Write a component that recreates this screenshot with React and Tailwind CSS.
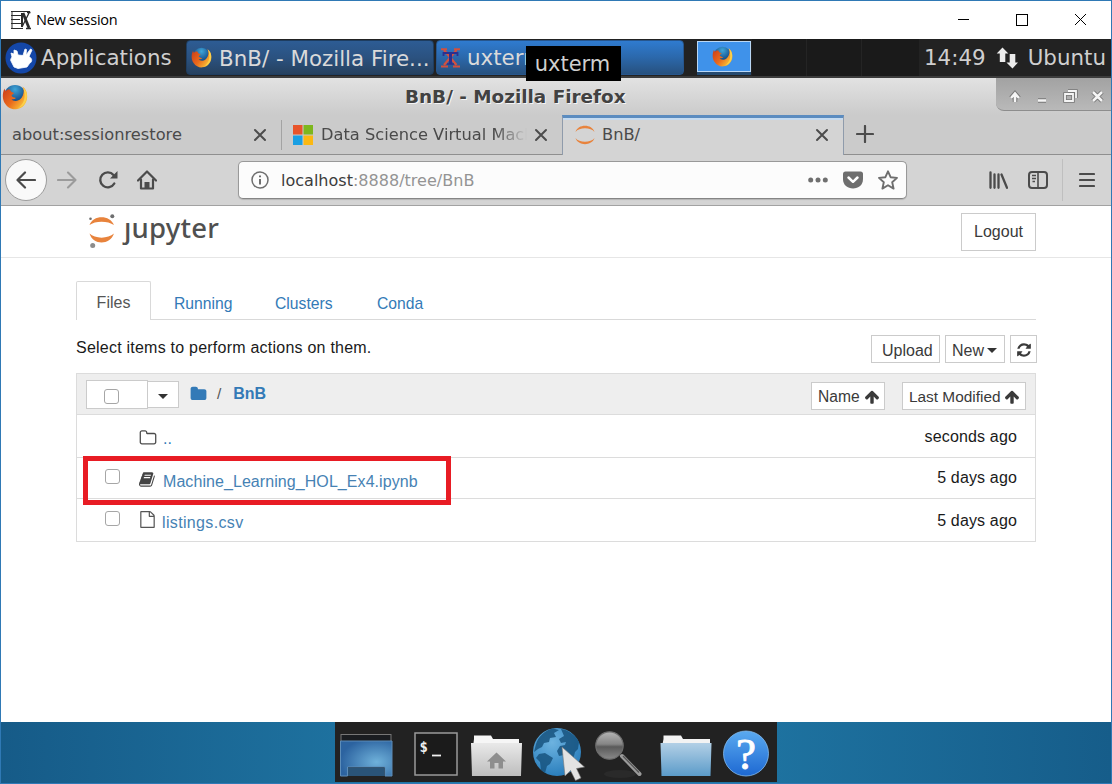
import React from "react";

const FA = {
  book: "M1639 478q40 57 18 129l-275 906q-19 64-76.5 107.5t-122.5 43.5h-923q-77 0-148.5-53.5t-99.5-131.5q-24-67-2-127 0-4 3-27t4-37q1-8-3-21.5t-3-19.5q2-11 8-21t16.5-23.5 16.5-23.5q23-38 45-91.5t30-91.5q3-10 .5-30t-.5-28q3-11 17-28t17-23q21-36 42-92t25-90q1-9-2.5-32t.5-28q4-13 22-30.5t22-22.5q19-26 42.5-84.5t27.5-96.5q1-8-3-25.5t-2-26.5q2-8 9-18t18-23 17-21q8-12 16.5-30.5t15-35 16-36 19.5-32 26.5-23.5 36-11.5 47.5 5.5l-1 3q38-9 51-9h761q74 0 114 56t18 130l-274 906q-36 119-71.5 153.5t-128.5 34.5h-869q-27 0-38 15-11 16-1 43 24 70 144 70h923q29 0 56-15.5t35-41.5l300-987q7-22 5-57 38 15 59 43zm-1064 2q-4 13 2 22.5t20 9.5h608q13 0 25.5-9.5t16.5-22.5l21-64q4-13-2-22.5t-20-9.5h-608q-13 0-25.5 9.5t-16.5 22.5zm-83 256q-4 13 2 22.5t20 9.5h608q13 0 25.5-9.5t16.5-22.5l21-64q4-13-2-22.5t-20-9.5h-608q-13 0-25.5 9.5t-16.5 22.5z",
  refresh: "M1639 1056q0 5-1 7-64 268-268 434.5t-478 166.5q-146 0-282.5-55t-243.5-157l-129 129q-19 19-45 19t-45-19-19-45v-448q0-26 19-45t45-19h448q26 0 45 19t19 45-19 45l-137 137q71 66 161 102t187 36q134 0 250-65t186-179q11-17 53-117 8-23 30-23h192q13 0 22.5 9.5t9.5 22.5zm25-800v448q0 26-19 45t-45 19h-448q-26 0-45-19t-19-45 19-45l138-138q-148-137-349-137-134 0-250 65t-186 179q-11 17-53 117-8 23-30 23h-199q-13 0-22.5-9.5t-9.5-22.5v-7q65-268 270-434.5t480-166.5q146 0 284 55.5t245 156.5l130-129q19-19 45-19t45 19 19 45z",
  arrowUp: "M1675 971q0 51-37 90l-75 75q-38 38-91 38-54 0-90-38l-294-293v704q0 52-37.5 84.5t-90.5 32.5h-128q-53 0-90.5-32.5t-37.5-84.5v-704l-294 293q-36 38-90 38t-90-38l-75-75q-38-38-38-90 0-53 38-91l651-651q35-37 90-37 54 0 91 37l651 651q37 39 37 91z",
  folder: "M1728 608v704q0 92-66 158t-158 66h-1216q-92 0-158-66t-66-158v-960q0-92 66-158t158-66h320q92 0 158 66t66 158v32h672q92 0 158 66t66 158z",
  folderO: "M1600 1312v-704q0-40-28-68t-68-28h-704q-40 0-68-28t-28-68v-64q0-40-28-68t-68-28h-320q-40 0-68 28t-28 68v960q0 40 28 68t68 28h1216q40 0 68-28t28-68zm128-704v704q0 92-66 158t-158 66h-1216q-92 0-158-66t-66-158v-960q0-92 66-158t158-66h320q92 0 158 66t66 158v32h672q92 0 158 66t66 158z",
  fileO: "M1596 380q28 28 48 76t20 88v1152q0 40-28 68t-68 28h-1344q-40 0-68-28t-28-68v-1600q0-40 28-68t68-28h896q40 0 88 20t76 48zm-444-244v376h376q-10-29-22-41l-313-313q-12-12-41-22zm384 1528v-1024h-416q-40 0-68-28t-28-68v-416h-768v1536h1280z",
};

function Fa({ name, className }) {
  return (
    <svg viewBox="0 0 1792 1792" fill="currentColor" className={"shrink-0 " + className}>
      <path d={FA[name]} />
    </svg>
  );
}

function Firefox({ className, id }) {
  return (
    <svg viewBox="0 0 26 26" className={"shrink-0 " + className}>
      <defs>
        <radialGradient id={id + "g"} cx="0.5" cy="0.2" r="0.7">
          <stop offset="0" stopColor="#3fa6d8" />
          <stop offset="0.6" stopColor="#1c5d99" />
          <stop offset="1" stopColor="#12355f" />
        </radialGradient>
        <linearGradient id={id + "f"} x1="0" y1="0" x2="1" y2="0.7">
          <stop offset="0" stopColor="#c8391a" />
          <stop offset="0.55" stopColor="#ea6a1c" />
          <stop offset="1" stopColor="#fcc83a" />
        </linearGradient>
      </defs>
      <circle cx="13" cy="12" r="11" fill={"url(#" + id + "g)"} />
      <path
        d="M2.5 4.5C.2 9 .2 15.500 3 19.500C6 24 10 25.500 14 25.200C20.500 24.800 25 19.500 25.200 13C25.300 9 24 5 20.500 2.700C22 5.500 22 8 20.800 11.500C19.500 15 16.500 17.200 13.500 17C11.500 16.900 10 16.200 9.500 15C11 15.500 12.500 15.300 14 14C12 13.500 10 13 9.500 11.500C10 10.500 11.500 10 12 9C10.500 8.500 8.500 8 8 5.500C5.500 5.300 4.500 6 3.800 7C3 6.500 2.700 5.500 2.500 4.500Z"
        fill={"url(#" + id + "f)"}
      />
      <path d="M20.500 2.700C25.500 6 26 13 23.500 18C22 21 19 23.500 16 24C20 21.500 23 17 22.500 11C22.300 7 21.800 5 20.500 2.700Z" fill="#fbd04a" />
    </svg>
  );
}

function Close({ className }) {
  return (
    <svg viewBox="0 0 14 14" className={"h-[14px] w-[14px] shrink-0 " + className} fill="none" stroke="#4c4c4c" strokeWidth="2" strokeLinecap="round">
      <path d="M2 2L12 12M12 2L2 12" />
    </svg>
  );
}

function TitleBar() {
  return (
    <div className="flex h-[38px] shrink-0 items-center bg-white">
      <svg viewBox="0 0 20 20" className="ml-[10px] h-5 w-5 shrink-0" fill="none" stroke="#2b2b2b">
        <path d="M0 1.500H19M0 5.500H10M0 9.500H9M0 13.500H10M0 18.500H12" strokeWidth="1.200" />
        <path d="M1 1V18.500" strokeWidth="1" />
        <path d="M11 3V17" strokeWidth="2" />
        <path d="M12 3L18 18" strokeWidth="2.800" />
        <path d="M18 3L11 17M15 18.500H20M16 2.500H19.500" strokeWidth="1.300" />
      </svg>
      <span className="ml-[5px] whitespace-nowrap font-['Open_Sans',sans-serif] text-[14.500px] tracking-[-0.250px] text-black">New session</span>
      <svg viewBox="0 0 130 14" className="mr-[24px] ml-auto h-[14px] w-[130px] shrink-0" fill="none" stroke="#000" strokeWidth="1" shapeRendering="crispEdges">
        <path d="M0.500 6.500H12" />
        <rect x="59.500" y="1.500" width="11" height="11" />
        <path d="M118 1L129 12M129 1L118 12" shapeRendering="auto" />
      </svg>
    </div>
  );
}

function Panel() {
  return (
    <div className="relative flex h-[39px] shrink-0 items-stretch border-b-2 border-[#3c3c3c] bg-[#222222] font-['DejaVu_Sans',sans-serif] text-[21.400px] text-[#cfcfcf]">
      <div className="flex w-[185px] shrink-0 items-center">
        <svg viewBox="0 0 32 32" className="ml-[4px] h-8 w-8 shrink-0">
          <circle cx="16" cy="16" r="15.500" fill="#1447a8" />
          <path d="M6.500 20C4.800 18 6 16.500 7 15L6 11L9 12L9 8L12 9L13 13L18 13.500L20 7L21.500 7.500L21 13L25.500 7L27 8L24 14.500C28 17 27 20 24.500 21.500L22 25L13 26.500L9 25Z" fill="#fff" stroke="#fff" strokeWidth="0.800" strokeLinejoin="round" />
        </svg>
        <span className="mt-[2px] ml-[4px]">Applications</span>
      </div>
      <div className="mt-px flex h-[35px] w-[248px] shrink-0 items-center rounded-sm border border-[#1e3d60] bg-linear-to-b from-[#2d5c94] via-[#2b5280] to-[#26415f] text-[#dadada]">
        <Firefox id="t" className="ml-[4px] h-[21px] w-[21px]" />
        <span className="mt-[3px] ml-[7px] whitespace-nowrap">BnB/ - Mozilla Fire...</span>
      </div>
      <div className="mt-px ml-[2px] flex h-[35px] w-[248px] shrink-0 items-center overflow-hidden rounded-sm border border-[#27568d] bg-linear-to-b from-[#2f7bd0] via-[#2b68ab] to-[#27517f] text-[#dadada]">
        <svg viewBox="0 0 20 20" className="ml-[4px] h-5 w-5 shrink-0" fill="none">
          <path d="M3 2L15.500 17M15.500 2L3 17" stroke="#d2503f" strokeWidth="2.200" />
          <path d="M0 1.300H6M13 1.300H19M0 18.500H7M12 18.500H19" stroke="#d2503f" strokeWidth="2" />
          <path d="M2.500 8V5H16.500V8" stroke="#2d2f8e" strokeWidth="1.800" />
          <path d="M9.500 5V16" stroke="#2d2f8e" strokeWidth="3" />
          <path d="M6 16H13" stroke="#2d2f8e" strokeWidth="1.500" />
        </svg>
        <span className="mt-px ml-[6px] whitespace-nowrap">uxterm</span>
      </div>
      <div className="ml-[13px] flex w-[55px] shrink-0 flex-col">
        <div className="mt-[2px] flex h-[31px] w-[54px] items-center justify-center border border-[#b9d7f5] bg-[#3f92ea]">
          <Firefox id="p" className="mr-[3px] h-[21px] w-[21px]" />
        </div>
        <div className="h-[3px] w-[54px] bg-[#254a70]" />
      </div>
      <div className="flex w-[167px] shrink-0 bg-[#1a1a1a]">
        <div className="w-[55px] border-r border-[#242424]" />
        <div className="w-[55px] border-r border-[#242424]" />
      </div>
      <div className="flex flex-1 items-center">
        <span className="mt-[2px] ml-[5px]">14:49</span>
        <svg viewBox="0 0 22 22" className="ml-[10px] h-[22px] w-[22px] shrink-0" fill="#ececec">
          <path d="M6.500 0.500L12.300 6.500H9.300V15H3.800V6.500H0.700Z" />
          <path d="M16.500 21.500L10.500 15.500H13.700V7H19.300V15.500H22Z" />
        </svg>
        <span className="mt-[2px] ml-[10px]">Ubuntu</span>
      </div>
      <div className="absolute top-[7px] left-[525px] z-10 flex h-[35px] w-[95px] items-center justify-center bg-black pt-[2px] pr-[2px] text-[21px] text-[#cfcfcf]">uxterm</div>
    </div>
  );
}

function WindowBar() {
  return (
    <div className="flex h-[37px] shrink-0 items-start bg-linear-to-b from-[#e2e2e2] to-[#cbcbcb]">
      <Firefox id="w" className="mt-[6px] ml-px h-[26px] w-[26px]" />
      <div className="mt-[6px] ml-[377px] w-[240px] font-['DejaVu_Sans',sans-serif] text-[18.400px] leading-[26px] font-bold whitespace-nowrap text-[#424242] [text-shadow:1px_1px_0_#f5f5f5]">BnB/ - Mozilla Firefox</div>
      <div className="ml-auto flex h-[33px] w-[115px] items-center rounded-bl-[8px] border-b border-[#8d8d8d] bg-linear-to-b from-[#a2a2a2] to-[#b9b9b9]">
        <svg viewBox="0 0 115 32" className="h-8 w-[115px]" fill="none">
          <g stroke="#777" strokeWidth="4.500">
            <path d="M19 24V16M15 20L19 15.500L23 20M42 22.500H50M97 14L106 23M106 14L97 23" />
            <path d="M69 16H77V23H69ZM72 13H80V20" strokeWidth="3.500" />
          </g>
          <g stroke="#f5f5f5" strokeWidth="2.500">
            <path d="M19 24V16M15 20L19 15.500L23 20M42 22.500H50M97 14L106 23M106 14L97 23" />
            <path d="M69 16H77V23H69ZM72 13H80V20" strokeWidth="1.800" />
          </g>
        </svg>
      </div>
    </div>
  );
}

function JupyterMark({ className }) {
  return (
    <svg viewBox="0 0 20 20" className={"shrink-0 " + className} fill="#e8833c">
      <path d="M0.500 7C3 -1.200 17 -1.200 19.500 7C16 2 4 2 0.500 7Z" />
      <path d="M0.500 13C3 21.200 17 21.200 19.500 13C16 18 4 18 0.500 13Z" />
    </svg>
  );
}

function Tabs() {
  return (
    <div className="flex h-[40px] shrink-0 bg-[#cbcbcb] font-['DejaVu_Sans',sans-serif] text-[16.250px] text-[#4a4a4a]">
      <div className="flex w-[281px] shrink-0 items-center border-b border-[#8f8f8f]">
        <span className="mt-[2px] ml-[11px] w-[241px]">about:sessionrestore</span>
        <Close className="mt-px" />
        <div className="ml-auto h-[30px] w-px bg-[#a3a3a3]" />
      </div>
      <div className="flex w-[280px] shrink-0 items-center border-b border-[#8f8f8f]">
        <svg viewBox="0 0 20 20" className="ml-[11px] h-5 w-5 shrink-0">
          <rect width="9.500" height="9.500" fill="#e8542a" />
          <rect x="10.500" width="9.500" height="9.500" fill="#7db71d" />
          <rect y="10.500" width="9.500" height="9.500" fill="#1a9fe3" />
          <rect x="10.500" y="10.500" width="9.500" height="9.500" fill="#fbb811" />
        </svg>
        <span className="mt-[2px] ml-[8px] w-[206px] overflow-hidden whitespace-nowrap [mask-image:linear-gradient(to_right,#000_84%,transparent)]">Data Science Virtual Mach</span>
        <Close className="mt-px ml-[7px]" />
      </div>
      <div className="flex w-[282px] shrink-0 items-center border-x border-t-[3px] border-x-[#8f9bab] border-t-[#5b8cc0] bg-[#d4d4d4] pb-[3px] shadow-[inset_0_2px_0_#c6dbf0]">
        <JupyterMark className="ml-[12px] h-[20px] w-[20px]" />
        <span className="ml-[7px] w-[213px]">BnB/</span>
        <Close className="" />
      </div>
      <div className="flex flex-1 items-center border-b border-[#8f8f8f]">
        <svg viewBox="0 0 18 18" className="-mt-[2px] ml-[12px] h-[18px] w-[18px]" stroke="#4c4c4c" strokeWidth="2.200" strokeLinecap="round">
          <path d="M9 1V17M1 9H17" />
        </svg>
      </div>
    </div>
  );
}

function NavBar() {
  return (
    <div className="flex h-[51px] shrink-0 items-center border-b border-[#a2a2a2] bg-[#d4d4d4]">
      <div className="ml-[4px] flex h-[42px] w-[42px] shrink-0 items-center justify-center rounded-full border border-[#9c9c9c] bg-[#f9f9f9]">
        <svg viewBox="0 0 20 18" className="h-[18px] w-5" fill="none" stroke="#4b4b4b" strokeWidth="2.200" strokeLinecap="round" strokeLinejoin="round">
          <path d="M19 9H2M9 1.500L1.500 9L9 16.500" />
        </svg>
      </div>
      <svg viewBox="0 0 20 18" className="ml-[10px] h-[18px] w-5 shrink-0" fill="none" stroke="#9b9b9b" strokeWidth="2.100" strokeLinecap="round" strokeLinejoin="round">
        <path d="M1 9H18M11 1.500L18.500 9L11 16.500" />
      </svg>
      <svg viewBox="0 0 20 20" className="ml-[21px] h-5 w-5 shrink-0" fill="none" stroke="#4b4b4b" strokeWidth="2.400">
        <path d="M16.300 13.500A7.500 7.500 0 1 1 15.500 5" strokeLinecap="round" />
        <path d="M19.500 1V8.500H12Z" fill="#4b4b4b" stroke="none" />
      </svg>
      <svg viewBox="0 0 20 20" className="ml-[19px] h-5 w-5 shrink-0" fill="none" stroke="#4b4b4b" strokeWidth="2.200" strokeLinecap="round" strokeLinejoin="round">
        <path d="M1 10.500L10 1.500L19 10.500M4 9.500V18.500H16V9.500" />
        <path d="M7.500 18.500V12H12.500V18.500Z" fill="#4b4b4b" stroke="none" />
      </svg>
      <div className="ml-[81px] flex h-[38px] w-[669px] shrink-0 items-center rounded-[5px] border border-[#999] border-b-[#858585] bg-[#fcfcfc] font-['DejaVu_Sans',sans-serif] text-[16.050px] shadow-[0_1px_1px_rgba(0,0,0,0.15)]">
        <svg viewBox="0 0 18 18" className="ml-[12px] h-[18px] w-[18px] shrink-0" fill="none" stroke="#6e6e6e">
          <circle cx="9" cy="9" r="8" strokeWidth="1.500" />
          <path d="M9 8V13.500M9 4.500V6.300" strokeWidth="2" />
        </svg>
        <span className="mt-[2px] ml-[12px] w-[527px] whitespace-nowrap text-[#949494]"><span className="text-[#3c3c3c]">localhost</span>:8888/tree/BnB</span>
        <svg viewBox="0 0 20 6" className="h-[6px] w-5 shrink-0" fill="#6f6f6f">
          <circle cx="2.700" cy="3" r="2.500" />
          <circle cx="10" cy="3" r="2.500" />
          <circle cx="17.300" cy="3" r="2.500" />
        </svg>
        <svg viewBox="0 0 20 18" className="ml-[15px] h-[18px] w-5 shrink-0">
          <path d="M2.500 0.500H17.500Q20 0.500 20 3V8C20 14 15.500 17.500 10 17.500S0 14 0 8V3Q0 0.500 2.500 0.500Z" fill="#6e6e6e" />
          <path d="M5.500 6.500L10 10.800L14.500 6.500" fill="none" stroke="#fff" strokeWidth="2.500" strokeLinecap="round" strokeLinejoin="round" />
        </svg>
        <svg viewBox="0 0 20 20" className="ml-[15px] h-5 w-5 shrink-0" fill="none" stroke="#6e6e6e" strokeWidth="1.900" strokeLinejoin="round">
          <path d="M10 1.300L12.600 7.200L19 7.900L14.200 12.200L15.600 18.600L10 15.300L4.400 18.600L5.800 12.200L1 7.900L7.400 7.200Z" />
        </svg>
      </div>
      <svg viewBox="0 0 20 18" className="ml-[81px] h-[18px] w-5 shrink-0" fill="none" stroke="#4b4b4b" strokeWidth="2.300" strokeLinecap="round">
        <path d="M2.500 1.500V16.800M6.500 3.500V16.800M10.500 3.500V16.800M13.500 3.500L19 16.800" />
      </svg>
      <svg viewBox="0 0 20 18" className="ml-[20px] h-[18px] w-5 shrink-0" fill="none" stroke="#4b4b4b">
        <rect x="1" y="1" width="18" height="16" rx="3" strokeWidth="2" />
        <path d="M10 1V17" strokeWidth="1.600" />
        <path d="M4 4.500H8M4 7.500H8M4.500 10.500H7" strokeWidth="1.300" />
      </svg>
      <div className="ml-[14px] h-[42px] w-px shrink-0 bg-[#bfbfbf]" />
      <svg viewBox="0 0 16 16" className="ml-[16px] h-4 w-4 shrink-0" stroke="#4b4b4b" strokeWidth="2.200" strokeLinecap="round">
        <path d="M1 2H15M1 8H15M1 14H15" />
      </svg>
    </div>
  );
}

const btn = "flex shrink-0 items-center border border-[#cbcbcb] bg-white text-[#3a3a3a] whitespace-nowrap";

function Checkbox({ className }) {
  return <div className={"h-[15px] w-[15px] shrink-0 rounded-[3px] border border-[#a6a6a6] bg-white " + className} />;
}

function Jupyter() {
  return (
    <div className="flex flex-1 flex-col bg-white font-['Liberation_Sans',Arial,sans-serif] text-[15.700px] text-[#1a1a1a]">
      <div className="flex h-[52px] shrink-0 items-start border-b border-[#e6e6e6]">
        <svg viewBox="0 0 30 36" className="mt-[7px] ml-[86px] h-9 w-[30px] shrink-0">
          <path d="M2.500 12C6 1.500 23 1.500 27 12C21 7.500 8 7.500 2.500 12Z" fill="#e8833c" />
          <path d="M2.500 20.500C6 32.500 23 32.500 27 20.500C21 26 8 26 2.500 20.500Z" fill="#e8833c" />
          <circle cx="25.300" cy="3.200" r="2" fill="#6e6f70" />
          <circle cx="3.500" cy="5.800" r="1.300" fill="#6e6f70" />
          <circle cx="5.700" cy="32.500" r="2.500" fill="#8c8c8c" />
        </svg>
        <div className="relative -mt-px ml-[7px] h-[46px] font-['Noto_Sans',sans-serif] text-[27.500px] leading-[46px] font-medium tracking-[0.200px] text-[#505050]">
          jupyter
          <div className="absolute top-[8px] left-0 h-[8px] w-[8px] bg-white" />
        </div>
        <div className={btn + " mt-[7px] mr-[75px] ml-auto h-[38px] w-[75px] justify-center text-[16px]"}>Logout</div>
      </div>

      <div className="flex h-[62px] shrink-0 items-end pl-[75px] text-[#337ab7]">
        <div className="flex h-[39px] w-[75px] shrink-0 items-center justify-center rounded-t-[2px] border border-b-0 border-[#d9d9d9] pt-[4px] text-[16px] text-[#555]">Files</div>
        <div className="flex h-[39px] w-[885px] items-center border-b border-[#d9d9d9] pt-[7px]">
          <span className="ml-[23px] w-[101px]">Running</span>
          <span className="w-[102px]">Clusters</span>
          <span>Conda</span>
        </div>
      </div>

      <div className="flex h-[53px] shrink-0 items-start pl-[75px]">
        <span className="mt-[17px] text-[16px] leading-[22px] tracking-[0.230px] whitespace-nowrap">Select items to perform actions on them.</span>
        <div className="mt-[15px] mr-[74px] ml-auto flex gap-[5px] text-[16px]">
          <div className={btn + " h-[28px] w-[69px] pt-[3px] pl-[10px]"}>Upload</div>
          <div className={btn + " h-[28px] w-[60px] pt-[3px] pl-[6px]"}>
            New
            <svg viewBox="0 0 10 5" className="ml-[3px] h-[5px] w-[10px]" fill="#333"><path d="M0 0H10L5 5Z" /></svg>
          </div>
          <div className={btn + " h-[28px] w-[27px] justify-center pt-px"}>
            <Fa name="refresh" className="h-[16px] w-[16px]" />
          </div>
        </div>
      </div>

      <div className="relative ml-[75px] flex h-[169px] w-[960px] shrink-0 flex-col border border-[#dcdcdc]">
        <div className="flex h-[41px] shrink-0 items-center border-b border-[#dcdcdc] bg-[#eeeeee] text-[15.400px]">
          <div className={btn + " mt-px ml-[9px] h-[29px] w-[62px]"}>
            <Checkbox className="mt-[4px] ml-[17px]" />
          </div>
          <div className={btn + " -ml-px h-[27px] w-[32px] justify-center"}>
            <svg viewBox="0 0 10 5" className="mt-[4px] h-[5px] w-[10px]" fill="#333"><path d="M0 0H10L5 5Z" /></svg>
          </div>
          <Fa name="folder" className="ml-[11px] h-[18px] w-[17px] text-[#337ab7]" />
          <span className="ml-[10px] text-[#555]">/</span>
          <span className="ml-[12px] text-[16px] font-bold text-[#337ab7]">BnB</span>
          <div className={btn + " mt-[3px] ml-auto h-[28px] w-[74px] pt-[2px] pl-[6px] text-[15.600px]"}>
            Name
            <Fa name="arrowUp" className="ml-[4px] h-[16px] w-[16px]" />
          </div>
          <div className={btn + " mt-[3px] mr-[9px] ml-[17px] h-[28px] w-[124px] pt-[2px] pl-[6px]"}>
            Last Modified
            <Fa name="arrowUp" className="ml-[3px] h-[16px] w-[16px]" />
          </div>
        </div>
        <div className="flex h-[43px] shrink-0 items-center border-b border-[#dcdcdc] text-[16px] tracking-[0.150px]">
          <Fa name="folderO" className="mt-[3px] ml-[62px] h-[18px] w-[18px] text-[#4c4c4c]" />
          <span className="mt-[5px] ml-[6px] text-[#337ab7]">..</span>
          <span className="mt-[2px] mr-[18px] ml-auto">seconds ago</span>
        </div>
        <div className="flex h-[41px] shrink-0 items-center border-b border-[#dcdcdc] text-[16px] tracking-[0.150px]">
          <Checkbox className="-mt-[3px] ml-[28px]" />
          <Fa name="book" className="mt-[2px] ml-[19px] h-[17px] w-[17px] text-[#444]" />
          <span className="mt-[7px] ml-[7px] tracking-[0.070px] text-[#4682b4]">Machine_Learning_HOL_Ex4.ipynb</span>
          <span className="mr-[18px] ml-auto">5 days ago</span>
        </div>
        <div className="flex h-[42px] shrink-0 items-center text-[16px] tracking-[0.150px]">
          <Checkbox className="-mt-[4px] ml-[28px]" />
          <Fa name="fileO" className="-mt-px ml-[19px] h-[17px] w-[17px] text-[#555]" />
          <span className="mt-[6px] ml-[6px] tracking-[0.350px] text-[#4682b4]">listings.csv</span>
          <span className="mt-px mr-[18px] ml-auto">5 days ago</span>
        </div>
        <div className="absolute top-[82px] left-[6px] h-[49px] w-[368px] border-[5px] border-[#e81c24]" />
      </div>
    </div>
  );
}

function Dock() {
  return (
    <div className="flex h-[61px] shrink-0 justify-center bg-linear-to-r from-[#165b88] via-[#2380ae] to-[#165d8a]">
      <div className="flex h-[60px] w-[442px] items-center bg-[#222222]">
        <svg viewBox="0 0 442 60" className="h-[60px] w-[442px]">
          <defs>
            <radialGradient id="desk" cx="0.700" cy="0.600" r="0.700">
              <stop offset="0" stopColor="#6fb1da" />
              <stop offset="1" stopColor="#2c63a0" />
            </radialGradient>
            <linearGradient id="silver" x1="0" y1="0" x2="0" y2="1">
              <stop offset="0" stopColor="#e9e9e9" />
              <stop offset="1" stopColor="#bdbdbd" />
            </linearGradient>
            <linearGradient id="blue" x1="0" y1="0" x2="0" y2="1">
              <stop offset="0" stopColor="#b3d0e6" />
              <stop offset="1" stopColor="#5b9bc9" />
            </linearGradient>
            <linearGradient id="help" x1="0" y1="0" x2="0" y2="1">
              <stop offset="0" stopColor="#5aaaf0" />
              <stop offset="1" stopColor="#1d68d2" />
            </linearGradient>
            <radialGradient id="globe" cx="0.400" cy="0.300" r="0.700">
              <stop offset="0" stopColor="#6db3e0" />
              <stop offset="1" stopColor="#2b7fbd" />
            </radialGradient>
            <linearGradient id="lens" x1="0" y1="0" x2="0" y2="1">
              <stop offset="0" stopColor="#b5b5b5" />
              <stop offset="0.450" stopColor="#858585" />
              <stop offset="0.550" stopColor="#5a5a5a" />
              <stop offset="1" stopColor="#8a8a8a" />
            </linearGradient>
          </defs>
          <rect x="6" y="12.500" width="50" height="8" fill="#1a1d21" stroke="#777" />
          <path d="M5.500 19H57V54H50V45H12.500V54H5.500Z" fill="url(#desk)" stroke="#5c8cb8" />
          <rect x="13" y="45.500" width="36.500" height="8.500" fill="#2a5478" />
          <rect x="80" y="11" width="42" height="42" fill="#1b1b1b" stroke="#9a9a9a" strokeWidth="1.500" />
          <text x="84.500" y="30" fill="#f0f0f0" fontFamily="DejaVu Sans Mono, monospace" fontWeight="bold" fontSize="14">$</text>
          <path d="M97 33.500H106" stroke="#f0f0f0" strokeWidth="1.800" />
          <path d="M139 17V13.500H156L158 17H184V25H138Z" fill="#f6f6f6" />
          <path d="M136 21H187L186 54H137Z" fill="url(#silver)" />
          <path d="M161.500 30.500L171 39.500H168V46.500H163.500V41H159.500V46.500H155V39.500H152Z" fill="#8e8e8e" />
          <circle cx="222" cy="30" r="24" fill="url(#globe)" />
          <path d="M201 22C203 15 210 8 218 6.500L224 8L219 11L221 15L215 16L214 20L209 21L207 25L203 27L199 30Z M204 32L210 31L218 36L215 42L212 44L210 51L206 48L205 40L201 36Z M226 7C234 8 241 14 244 20L243 27L240 30L238 38L233 35L229 33L224 34L222 29L225 24L230 23L231 20L226 21L224 17L229 14Z" fill="#17547f" opacity="0.850" />
          <path d="M227 25L230 54L235.500 48.500L240.500 58.500L246 56L241.500 46.500L249.500 45Z" fill="#e3e3e3" stroke="#777" strokeWidth="0.600" />
          <ellipse cx="285" cy="52" rx="16" ry="4" fill="#2a2a2a" />
          <path d="M287 34L304.500 52" stroke="#9b9b9b" strokeWidth="4" strokeLinecap="round" />
          <path d="M288 34L304 50.500" stroke="#555" strokeWidth="1.300" />
          <circle cx="274.500" cy="23.500" r="13.700" fill="url(#lens)" stroke="#6d6d6d" strokeWidth="1.200" />
          <path d="M328.500 17V13.500H346L348 17H375V25H327Z" fill="#f3f3f3" />
          <path d="M325.500 21H376.500L375.500 54H326.500Z" fill="url(#blue)" />
          <circle cx="411" cy="31.500" r="22.500" fill="url(#help)" stroke="#84bdf0" strokeWidth="0.800" />
          <text x="411" y="47" textAnchor="middle" fill="#fff" stroke="#fff" strokeWidth="0.800" fontFamily="Liberation Serif, serif" fontSize="45">?</text>
        </svg>
      </div>
    </div>
  );
}

export default function App() {
  return (
    <div className="flex h-[784px] w-[1112px] flex-col overflow-hidden border border-[#2f79b5] bg-white">
      <TitleBar />
      <Panel />
      <WindowBar />
      <Tabs />
      <NavBar />
      <Jupyter />
      <Dock />
    </div>
  );
}
